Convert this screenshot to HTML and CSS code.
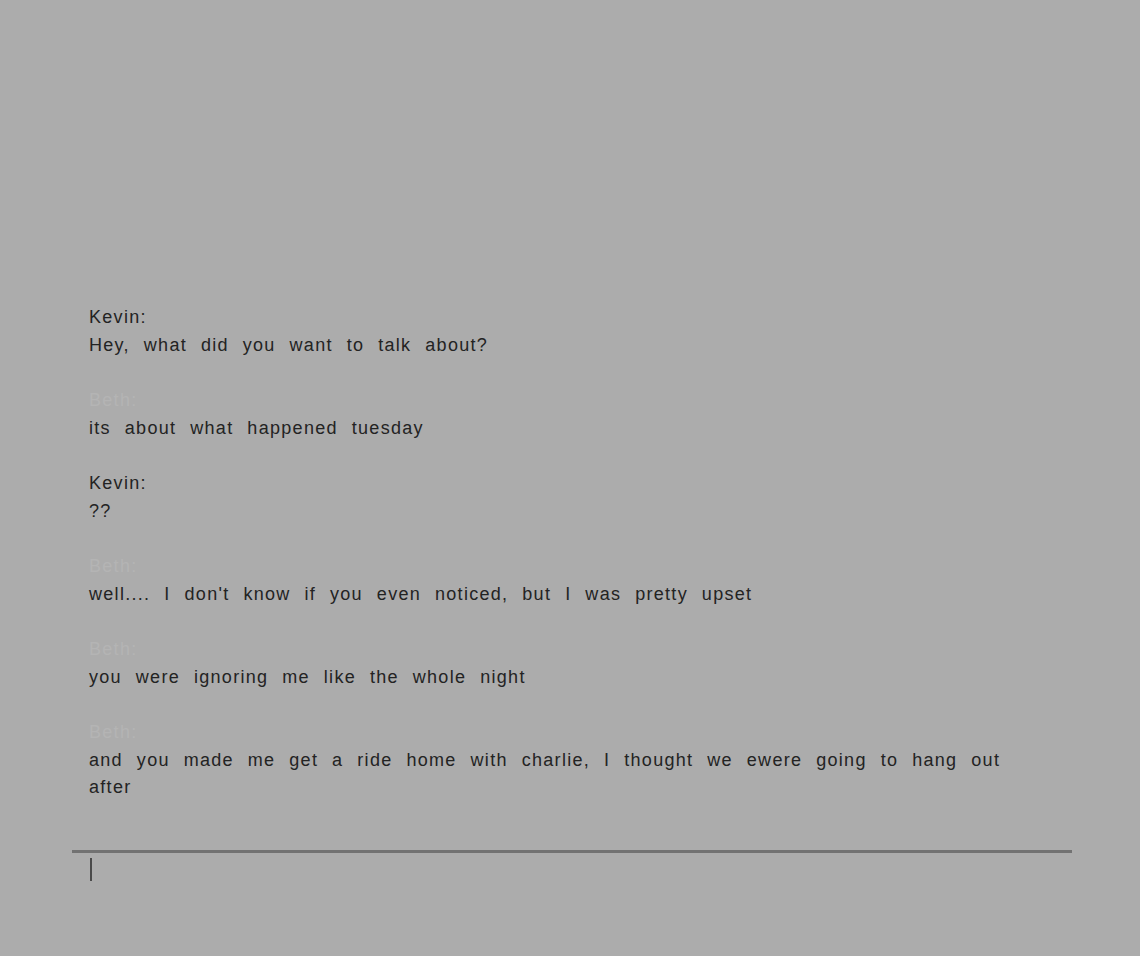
FILE: index.html
```html
<!DOCTYPE html>
<html>
<head>
<meta charset="utf-8">
<link rel="stylesheet" href="styles.css">
</head>
<body>
<div class="chat">
  <div class="log">
    <div class="msg"><div class="who kevin">Kevin:</div><div class="text">Hey, what did you want to talk about?</div></div>
    <div class="msg"><div class="who beth">Beth:</div><div class="text">its about what happened tuesday</div></div>
    <div class="msg"><div class="who kevin">Kevin:</div><div class="text">??</div></div>
    <div class="msg"><div class="who beth">Beth:</div><div class="text">well.... I don't know if you even noticed, but I was pretty upset</div></div>
    <div class="msg"><div class="who beth">Beth:</div><div class="text">you were ignoring me like the whole night</div></div>
    <div class="msg"><div class="who beth">Beth:</div><div class="text">and you made me get a ride home with charlie, I thought we ewere going to hang out after</div></div>
  </div>
  <div class="input"><span class="cursor"></span></div>
</div>
</body>
</html>
```
FILE: styles.css
```css
html, body {
  margin: 0;
  height: 100%;
  background: #acacac;
}
body {
  font-family: "Liberation Sans", Arial, sans-serif;
  font-size: 18px;
  color: #232323;
}
.chat {
  width: 1000px;
  margin-left: 72px;
  padding-top: 304px;
}
.log {
  display: flex;
  flex-direction: column;
  gap: 28px;
  padding: 0 16px 48px 17px;
}
.msg {
  line-height: 27.5px;
  letter-spacing: 1.3px;
  word-spacing: 7.6px;
}
.who.beth {
  color: #b4b4b4;
}
.input {
  border-top: 3px solid #727272;
  height: 80px;
  padding: 5px 18px;
}
.cursor {
  display: block;
  width: 2px;
  height: 23px;
  background: #4a4a4a;
}
```
